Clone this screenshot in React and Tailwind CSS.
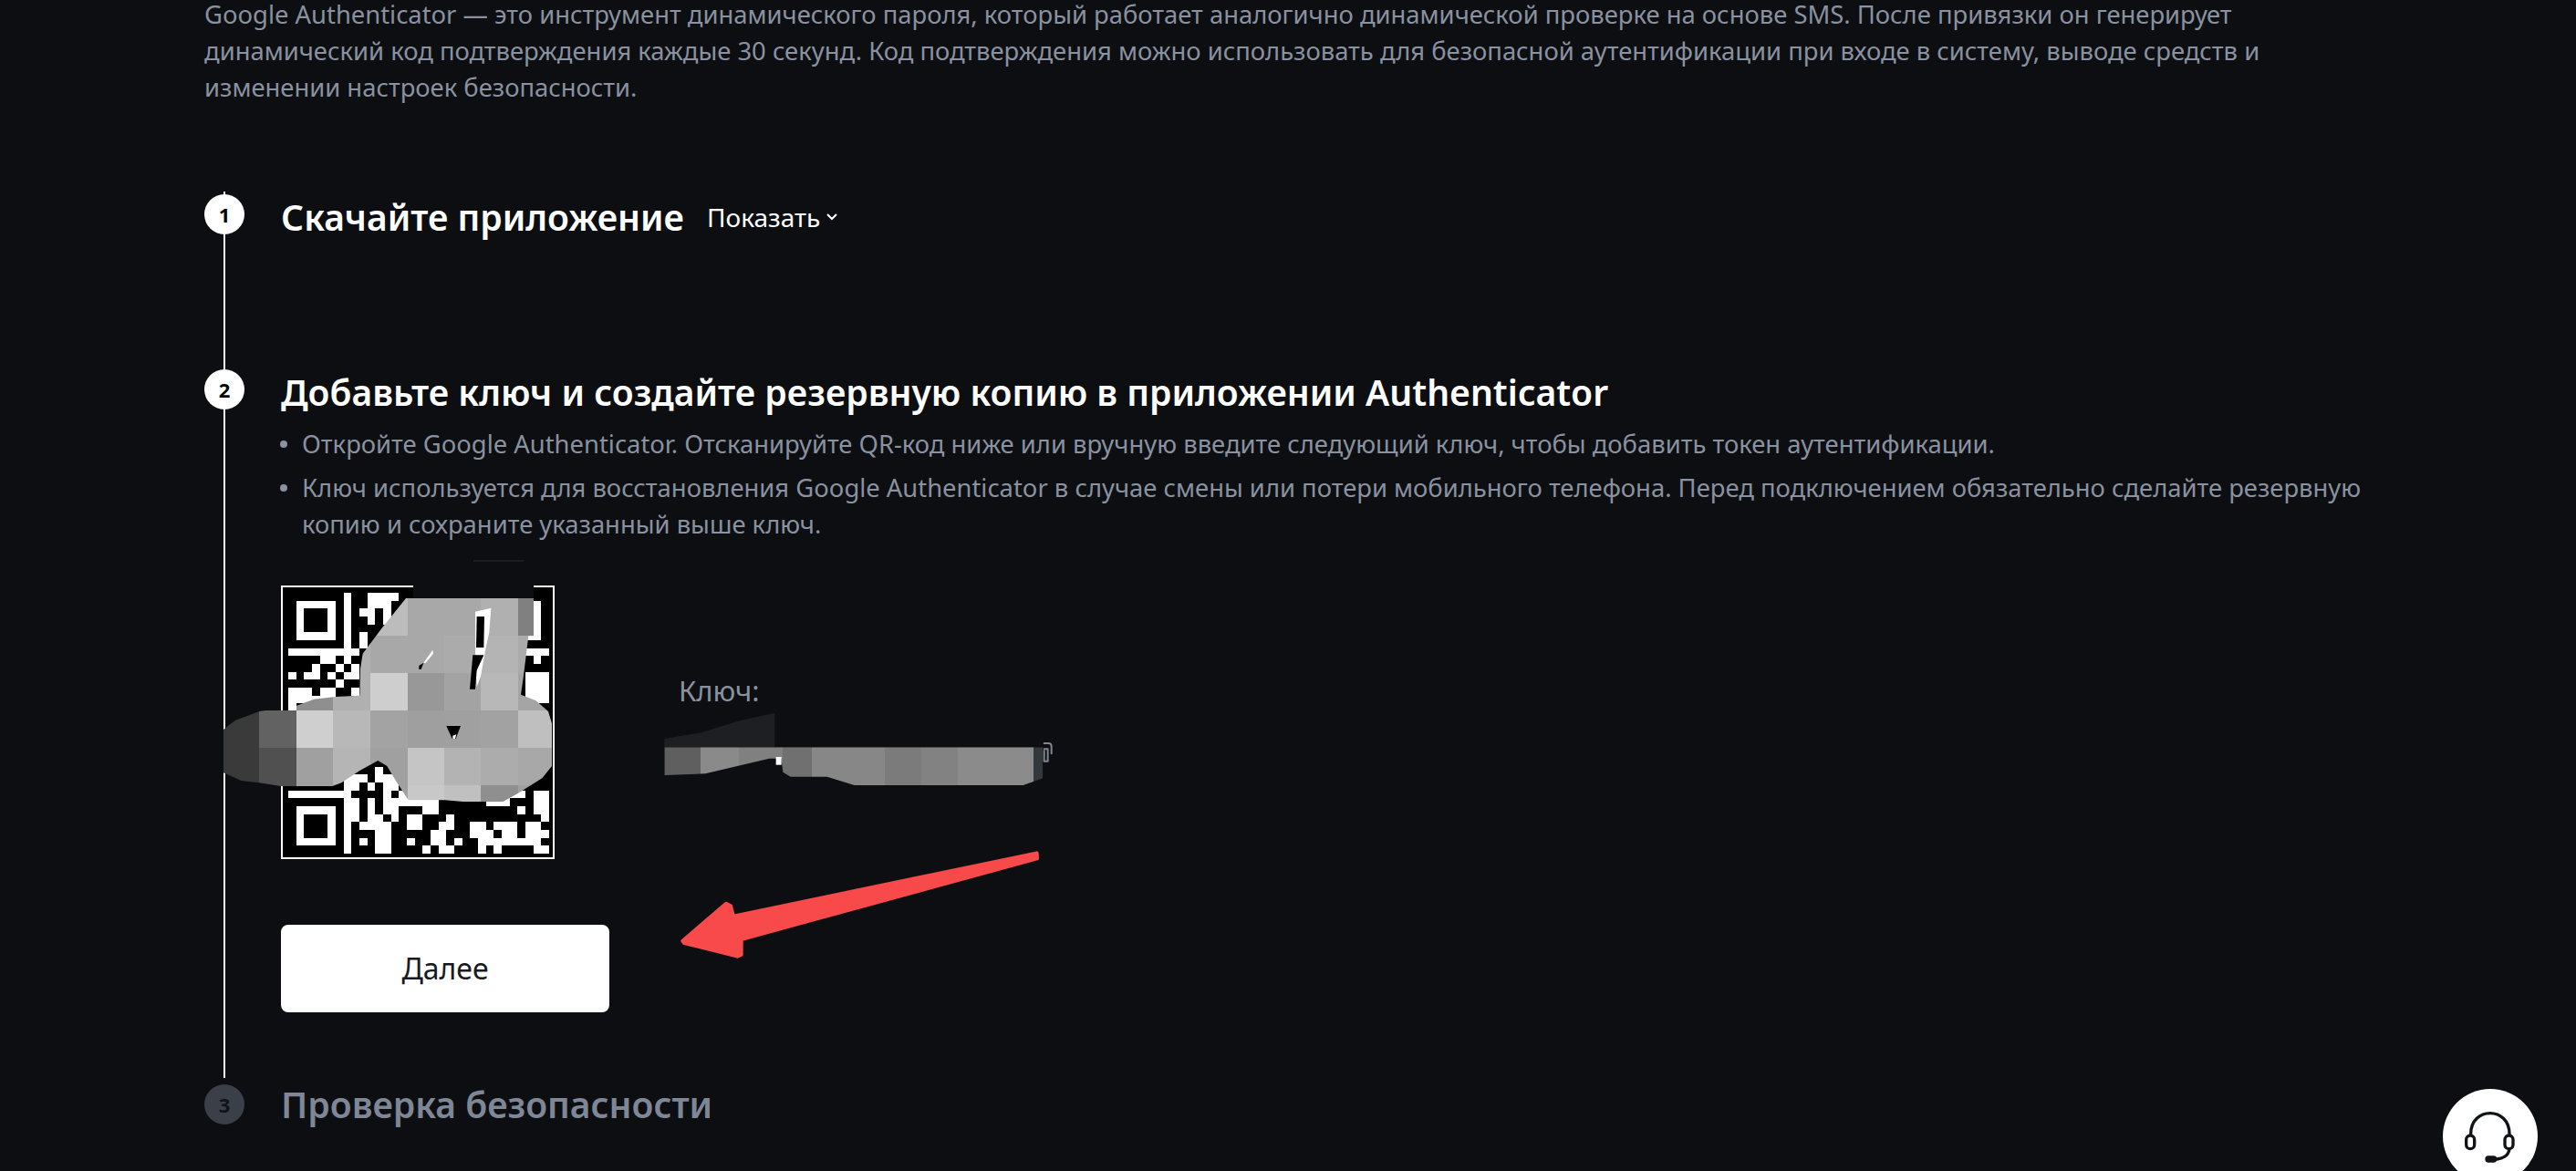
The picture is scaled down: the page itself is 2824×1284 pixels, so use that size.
const RUNS = {
  0: [[7,7],[10,13]], 1: [[7,7],[10,12]], 2: [[7,7],[9,10],[12,12]], 3: [[7,7],[10,10],[12,12]],
  4: [[7,7]], 5: [[7,7],[9,9]], 6: [[7,7],[9,9]], 7: [[0,8],[30,32]],
  8: [[4,5],[7,7],[31,31]], 9: [[3,3],[6,6],[8,8]], 10: [[0,0],[2,3],[5,5],[7,8],[30,32]],
  11: [[6,6],[30,32]], 12: [[0,2],[4,5],[8,8],[30,32]], 13: [[0,5],[30,32]], 14: [[0,0]],
  22: [[11,11]], 23: [[7,9],[11,13]], 24: [[7,8],[10,10],[12,13]],
  25: [[0,7],[12,12],[14,28],[29,29],[31,32]],
  26: [[7,8],[10,10],[12,18],[25,27],[31,32]],
  27: [[7,8],[10,10],[12,13],[17,18],[29,29],[31,32]],
  28: [[7,8],[10,11],[13,13],[15,16],[20,20],[32,32]],
  29: [[7,7],[9,12],[15,16],[19,20],[23,24],[26,28],[30,31]],
  30: [[7,7],[11,12],[18,19],[23,25],[27,28],[30,32]],
  31: [[7,7],[9,9],[11,12],[15,15],[18,19],[21,21],[24,31]],
  32: [[7,7],[11,12],[17,17],[19,20],[24,24],[26,26],[31,32]],
};
const FINDERS = [[0,0],[26,0],[0,26]];
const X = [72,190,312,433,555,677,797,918,1040,1160];
const Y = [130,262,385,507,630,752,815];
const CELLS = [
  [null,null,null,null,'#bcbcbc','#a8a8a8','#a8a8a8','#b0b0b0','#808080'],
  [null,null,null,'#b0b0b0','#a8a8a8','#a8a8a8','#ababab','#b4b4b4','#ababab'],
  [null,null,'#8f8f8f','#b0b0b0','#cecece','#989898','#a3a3a3','#b8b8b8','#a5a5a5'],
  ['#3a3a3a','#626262','#cfcfcf','#b8b8b8','#a3a3a3','#9f9f9f','#a0a0a0','#a2a2a2','#bfbfbf'],
  ['#3a3a3a','#505050','#a0a0a0','#b5b5b5','#a0a0a0','#c5c5c5','#b3b3b3','#acacac','#a8a8a8'],
  [null,'#505050','#a0a0a0','#b5b5b5','#a0a0a0','#c8c8c8','#c0c0c0','#8f8f8f','#a0a0a0'],
];
const KEY_BARS = [[85,205,'#5f5f5f'],[205,330,'#8a8a8a'],[330,475,'#808080'],[475,570,'#707070'],[570,810,'#878787'],[810,930,'#7b7b7b'],[930,1050,'#828282'],[1050,1300,'#8b8b8b'],[1300,1332,'#33383c']];

function Qr() {
  return (
    <div className="relative w-[300px] h-[300px] shrink-0 border-2 border-white bg-black">
      <svg className="absolute left-[-89px] top-[-34px] overflow-visible" width="420" height="350" viewBox="0 0 1260 1050">
        <g shapeRendering="crispEdges">
          {Object.entries(RUNS).map(([r, runs]) => runs.map(([a, b]) => (
            <rect key={r + '-' + a} x={285 + 26 * a} y={120 + 26 * Number(r)} width={26 * (b - a + 1)} height="26" fill="#fff" />
          )))}
          {FINDERS.map(([c, r]) => (
            <g key={c + '-' + r}>
              <rect x={285 + 26 * c} y={120 + 26 * r} width="182" height="182" fill="#000" />
              <rect x={311 + 26 * c} y={146 + 26 * r} width="130" height="130" fill="#fff" />
              <rect x={337 + 26 * c} y={172 + 26 * r} width="78" height="78" fill="#000" />
            </g>
          ))}
          <rect x="696" y="90" width="396" height="48" fill="#0c0e11" />
          <rect x="895" y="12" width="165" height="5" fill="#1c1e22" />
        </g>
        <clipPath id="smudge">
          <polygon points="672,138 1092,138 1092,262 1075,262 1058,400 1050,455 1100,475 1140,510 1152,550 1152,690 1120,730 1040,780 990,808 870,808 800,802 680,802 640,740 610,690 580,672 520,705 460,745 430,756 260,756 190,745 130,738 72,712 72,570 110,540 190,510 310,492 370,470 440,462 520,458 522,370 530,320 590,240" />
        </clipPath>
        <g clipPath="url(#smudge)" shapeRendering="crispEdges">
          {CELLS.map((row, j) => row.map((c, i) => c && (
            <rect key={j + '-' + i} x={X[i]} y={Y[j]} width={X[i + 1] - X[i]} height={Y[j + 1] - Y[j]} fill={c} />
          )))}
        </g>
        <polygon points="900,182 952,170 946,250 934,305 918,395 905,430 900,340" fill="#fff" />
        <polygon points="905,198 930,198 928,300 903,300" fill="#000" />
        <polygon points="892,325 928,325 905,375 900,437 882,437" fill="#000" />
        <polygon points="805,558 852,558 836,600 824,600" fill="#000" />
        <polygon points="826,590 838,586 834,600 826,600" fill="#fff" />
        <polygon points="730,350 760,308 762,320 736,352" fill="#fff" />
        <polygon points="715,360 730,350 722,372 715,372" fill="#000" />
      </svg>
    </div>
  );
}

function Smudge() {
  return (
    <svg className="absolute left-0 top-0" width="500" height="200" viewBox="0 0 1500 600">
      <polygon points="85,330 205,310 335,270 448,245 448,358 85,358" fill="#1d1f22" />
      <clipPath id="keybar">
        <polygon points="85,358 1330,358 1330,460 1265,483 710,483 620,455 500,455 475,440 470,395 430,395 220,445 85,450" />
      </clipPath>
      <g clipPath="url(#keybar)" shapeRendering="crispEdges">
        {KEY_BARS.map(([a, b, c]) => <rect key={a} x={a} y="350" width={b - a} height="140" fill={c} />)}
      </g>
      <path d="M1334 345 h14 q10 0 10 10 v24 M1334 370 v34 h12 q0 0 0 0 v-40 h-12" fill="none" stroke="#7f8794" strokeWidth="6" strokeLinecap="round" strokeLinejoin="round" />
      <rect x="452" y="390" width="18" height="26" fill="#fff" />
    </svg>
  );
}

export default function App() {
  return (
    <div className="relative w-full h-[1284px] overflow-hidden bg-[#0c0e11] font-['Noto_Sans','Inter',sans-serif] text-[27.4px] leading-[40px] text-[#8a91a0]">
      <div className="pl-[224px] pr-[224px] -mt-[4px]">
        <p className="w-[2500px]">
          Google Authenticator — это инструмент динамического пароля, который работает аналогично динамической проверке на основе SMS. После привязки он генерирует<br />
          динамический код подтверждения каждые 30 секунд. Код подтверждения можно использовать для безопасной аутентификации при входе в систему, выводе средств и<br />
          изменении настроек безопасности.
        </p>

        <div className="mt-[94px] flex gap-[40px]">
          <div className="w-[44px] flex flex-col items-center">
            <div className="w-[2px] h-[3px] bg-white" />
            <div className="w-[44px] h-[44px] shrink-0 rounded-full bg-white text-black flex items-center justify-center text-[22px] font-bold">1</div>
            <div className="w-[2px] flex-1 bg-white" />
          </div>
          <div className="h-[195px] flex items-start pt-[3px] gap-[25px]">
            <h2 className="text-[39.1px] leading-[50px] font-semibold text-white">Скачайте приложение</h2>
            <div className="h-[50px] flex items-center gap-[6px] text-[28px] text-white">
              Показать
              <svg width="14" height="14" viewBox="0 0 14 14" fill="none" stroke="#fff" strokeWidth="2"><path d="M2 4l5 5 5-5" /></svg>
            </div>
          </div>
        </div>

        <div className="flex gap-[40px]">
          <div className="w-[44px] flex flex-col items-center">
            <div className="w-[44px] h-[44px] shrink-0 rounded-full bg-white text-black flex items-center justify-center text-[22px] font-bold">2</div>
            <div className="w-[2px] flex-1 bg-white" />
            <div className="h-[4px]" />
          </div>
          <div className="flex-1 pb-[76px]">
            <h2 className="text-[39.1px] leading-[50px] font-semibold text-white">Добавьте ключ и создайте резервную копию в приложении Authenticator</h2>
            <ul className="mt-[12px] flex flex-col gap-[8px]">
              <li className="flex gap-[16px]">
                <span className="w-[8px] h-[8px] rounded-full bg-[#8a91a0] mt-[16px] shrink-0 -ml-[1px]" />
                <span>Откройте Google Authenticator. Отсканируйте QR-код ниже или вручную введите следующий ключ, чтобы добавить токен аутентификации.</span>
              </li>
              <li className="flex gap-[16px]">
                <span className="w-[8px] h-[8px] rounded-full bg-[#8a91a0] mt-[16px] shrink-0 -ml-[1px]" />
                <span>Ключ используется для восстановления Google Authenticator в случае смены или потери мобильного телефона. Перед подключением обязательно сделайте резервную<br />копию и сохраните указанный выше ключ.</span>
              </li>
            </ul>
            <div className="mt-[47px] flex items-start gap-[136px]">
              <Qr />
              <div className="pt-[95px]">
                <div className="text-[31px] leading-[40px]">Ключ:</div>
                <div className="h-[60px]" />
              </div>
            </div>
            <button className="mt-[72px] block w-[360px] h-[96px] rounded-[8px] bg-white text-[#181a1f] text-[32px]">Далее</button>
          </div>
        </div>

        <div className="flex gap-[40px] items-center">
          <div className="w-[44px] h-[44px] rounded-full bg-[#3b3f47] text-[#111317] flex items-center justify-center text-[22px] font-bold">3</div>
          <h2 className="text-[39.1px] leading-[50px] font-semibold text-[#7f8797]">Проверка безопасности</h2>
        </div>
      </div>

      <div className="absolute left-[700px] top-[700px] w-[500px] h-[400px]">
        <Smudge />
        <svg className="absolute left-0 top-0" width="500" height="400" viewBox="0 0 1500 1200">
          <polygon points="1310,706 1311,724 338,990 338,1040 325,1046 150,1002 145,995 288,872 303,880 312,914" fill="#f84a4a" stroke="#f84a4a" strokeWidth="12" strokeLinejoin="round" />
        </svg>
      </div>

      <div className="absolute right-[42px] top-[1194px] w-[104px] h-[104px] rounded-full bg-white">
        <svg className="absolute left-0 top-0" width="104" height="104" viewBox="0 0 312 312">
          <g fill="none" stroke="#111317" strokeWidth="10" strokeLinecap="round">
            <path d="M92 148 C92 57 219 57 219 148" />
            <rect x="77" y="153" width="27" height="44" rx="13.5" />
            <rect x="204" y="153" width="27" height="44" rx="13.5" />
            <path d="M219 198 C215 222 198 228 172 232" />
            <path d="M150 231 H167" strokeWidth="22" />
          </g>
        </svg>
      </div>
    </div>
  );
}
